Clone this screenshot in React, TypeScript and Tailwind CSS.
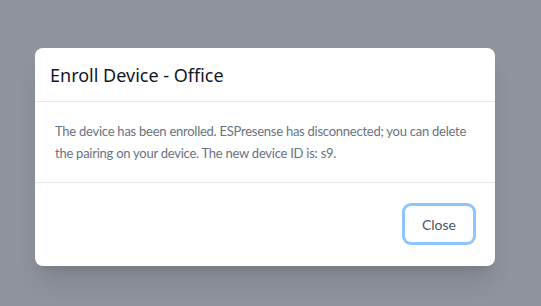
export default function App() {
  return (
    <div
      className="flex h-[306px] w-[541px] items-start bg-[#8f939c] pl-[35px] pt-[48px]"
      style={{ fontFamily: '"Noto Sans", "Open Sans", sans-serif' }}
    >
      <div className="w-[460px] overflow-hidden rounded-lg bg-white shadow-xl">
        {/* Header */}
        <div className="flex h-[54px] items-center border-b border-gray-200 px-[15px]">
          <h2 className="text-[18px] leading-7 text-gray-900">Enroll Device - Office</h2>
        </div>

        {/* Body */}
        <div className="border-b border-gray-200 px-5 py-[18px]" style={{ fontFamily: 'Lato, "Noto Sans", sans-serif' }}>
          <p className="text-[13px] leading-[22px] tracking-[-0.25px] text-gray-500">
            The device has been enrolled. ESPresense has disconnected; you can delete the pairing on
            your device. The new device ID is: s9.
          </p>
        </div>

        {/* Footer */}
        <div className="flex justify-end px-[22px] pb-[24px] pt-[23px]">
          <button
            className="h-9 rounded-md bg-white px-[17px] text-[14px] text-gray-600 ring-[3px] ring-blue-300"
            style={{ fontFamily: 'Lato, "Noto Sans", sans-serif' }}
          >
            Close
          </button>
        </div>
      </div>
    </div>
  );
}
